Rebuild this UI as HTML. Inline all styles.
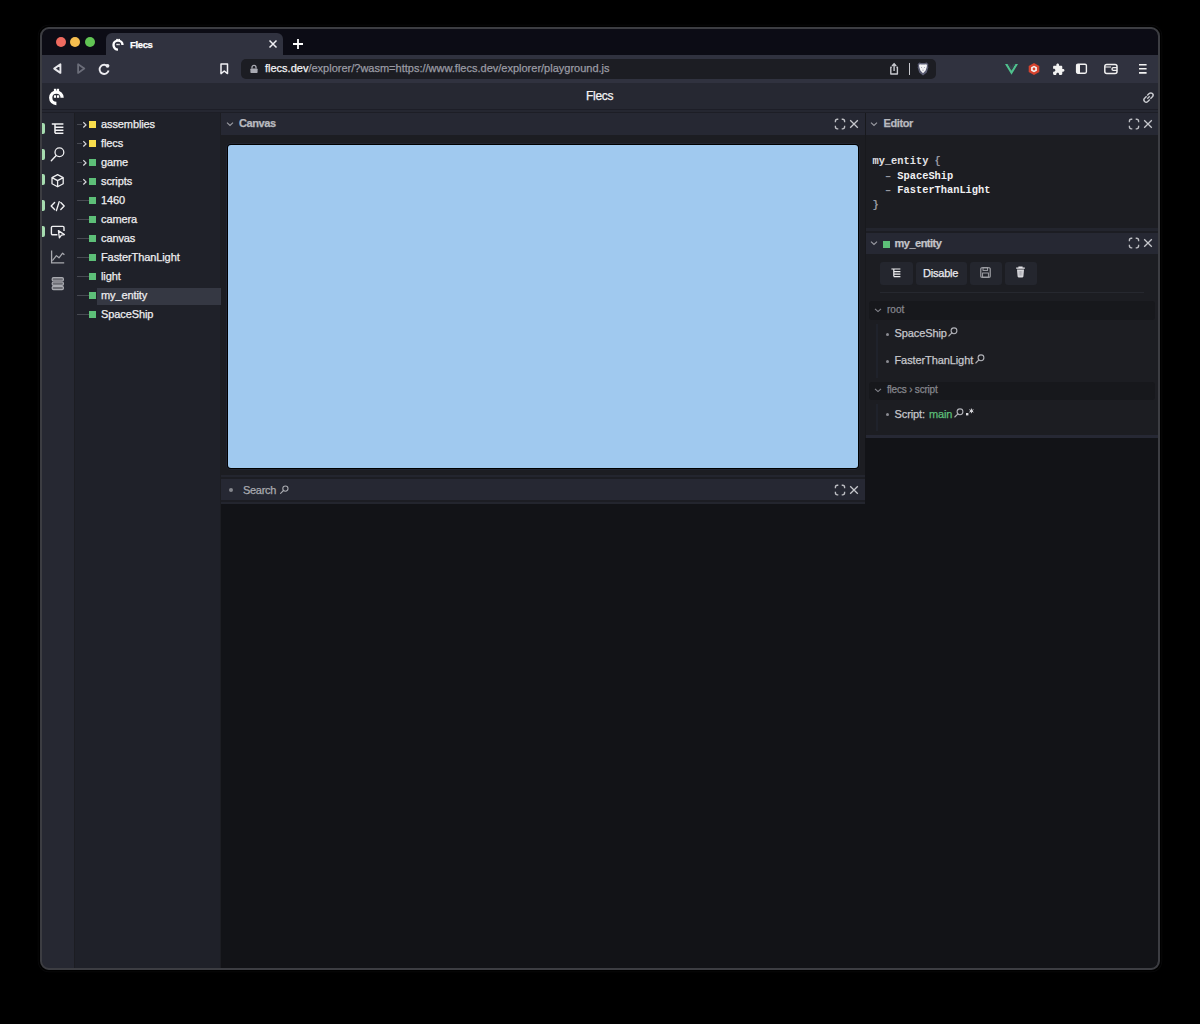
<!DOCTYPE html>
<html><head><meta charset="utf-8">
<style>
*{margin:0;padding:0;box-sizing:border-box}
html,body{width:1200px;height:1024px;background:#000;overflow:hidden;font-family:"Liberation Sans",sans-serif}
.a{position:absolute}
#win{position:absolute;left:41px;top:27px;width:1118px;height:943px;border:1px solid #3c3d42;border-radius:9px;overflow:hidden;background:#121317}
#pg{position:absolute;left:-42px;top:-28px;width:1200px;height:1024px}
svg{position:absolute;overflow:visible}
.t{position:absolute;white-space:pre;line-height:1;-webkit-text-stroke:0.25px currentColor}
</style></head><body>
<div id="win"><div id="pg">
 <!-- tab bar -->
 <div class="a" style="left:0;top:0;width:1200px;height:55px;background:#0c0c15"></div>
 <div class="a" style="left:0;top:55px;width:1200px;height:28px;background:#30323f"></div>
 <div class="a" style="left:106px;top:33px;width:177px;height:23px;background:#30323f;border-radius:6px 6px 0 0"></div>
 <!-- traffic lights -->
 <div class="a" style="left:55.8px;top:37px;width:10px;height:10px;border-radius:50%;background:#ee6a5f"></div>
 <div class="a" style="left:70.4px;top:37px;width:10px;height:10px;border-radius:50%;background:#f5bd4f"></div>
 <div class="a" style="left:85px;top:37px;width:10px;height:10px;border-radius:50%;background:#61c454"></div>
 <!-- tab -->
 <svg style="left:111px;top:37px" width="15" height="15" viewBox="0 0 15 15">
  <path d="M7 12.6 A4.5 4.5 0 1 1 11.5 8.1" fill="none" stroke="#fff" stroke-width="2.4"/>
  <rect x="5.2" y="1.9" width="1.7" height="1.5" fill="#fff"/><rect x="7.3" y="1.9" width="1.7" height="1.5" fill="#fff"/>
  <rect x="5.4" y="6.8" width="1.5" height="1.4" fill="#fff"/><rect x="7.2" y="6.8" width="1.5" height="1.4" fill="#fff"/>
 </svg>
 <div class="t" style="left:130px;top:40px;font-size:9.5px;font-weight:bold;color:#fff;letter-spacing:-0.35px">Flecs</div>
 <svg style="left:268px;top:39px" width="10" height="10" viewBox="0 0 10 10"><path d="M1.5 1.5 L8.5 8.5 M8.5 1.5 L1.5 8.5" stroke="#f0f0f4" stroke-width="1.5"/></svg>
 <svg style="left:292px;top:38px" width="12" height="12" viewBox="0 0 12 12"><path d="M6 1 V11 M1 6 H11" stroke="#fff" stroke-width="1.8"/></svg>
 <!-- toolbar -->
 <svg style="left:50px;top:61px" width="16" height="16" viewBox="0 0 16 16"><path d="M4.2 7.6 L10.4 3.3 V11.9 Z" fill="none" stroke="#e6e6ea" stroke-width="1.9" stroke-linejoin="round"/></svg>
 <svg style="left:74px;top:61px" width="16" height="16" viewBox="0 0 16 16"><path d="M10.3 7.6 L4.1 3.3 V11.9 Z" fill="none" stroke="#6b6d79" stroke-width="1.8" stroke-linejoin="round"/></svg>
 <svg style="left:96px;top:61px" width="16" height="16" viewBox="0 0 16 16"><path d="M11.9 5.6 A4.6 4.6 0 1 0 12.6 9.6" fill="none" stroke="#ececf0" stroke-width="1.9"/><circle cx="11.5" cy="4.8" r="1.9" fill="#ececf0"/></svg>
 <svg style="left:218px;top:61px" width="12" height="16" viewBox="0 0 12 16"><path d="M3 3 H9.5 V12.6 L6.25 10 L3 12.6 Z" fill="none" stroke="#f0f0f4" stroke-width="1.5" stroke-linejoin="round"/></svg>
 <div class="a" style="left:241px;top:59px;width:695px;height:20px;background:#1c1d23;border-radius:5px"></div>
 <svg style="left:249px;top:64px" width="10" height="10" viewBox="0 0 10 10"><path d="M3 4.6 V3.3 A2 2 0 0 1 7 3.3 V4.6" fill="none" stroke="#a9aab2" stroke-width="1.3"/><rect x="1.4" y="4.5" width="7.2" height="4.6" rx="0.8" fill="#a9aab2"/></svg>
 <div class="t" style="left:265px;top:63px;font-size:11px;color:#f2f2f4">flecs.dev<span style="color:#9a9ba3">/explorer/?wasm=https://www.flecs.dev/explorer/playground.js</span></div>
 <svg style="left:888px;top:62px" width="12" height="14" viewBox="0 0 12 14"><path d="M3.8 5.2 H2.8 V12 H9.4 V5.2 H8.4" fill="none" stroke="#c8c9cf" stroke-width="1.4" stroke-linejoin="round"/><path d="M6.1 9 V2 M4 4 L6.1 1.8 L8.2 4" fill="none" stroke="#c8c9cf" stroke-width="1.4"/></svg>
 <div class="a" style="left:908.5px;top:63px;width:1.3px;height:12px;background:#c8c9ce"></div>
 <svg style="left:916px;top:61px" width="14" height="16" viewBox="0 0 14 16"><path d="M3.2 1.4 L5.2 1.9 H8.8 L10.8 1.4 L12.4 3.4 L12 5 L12.4 6.2 L10.8 11.6 L7 14.6 L3.2 11.6 L1.6 6.2 L2 5 L1.6 3.4 Z" fill="#5a5c72"/><path d="M3.6 3.2 L5.4 3.4 H8.6 L10.4 3.2 L11 4.4 L10.6 6.4 L9.6 9.6 L7 12.2 L4.4 9.6 L3.4 6.4 L3 4.4 Z" fill="#f4f4f6"/><path d="M5 6.2 L6.2 7 M9 6.2 L7.8 7 M6.2 9.2 H7.8" stroke="#8a8ca0" stroke-width="0.7"/></svg>
 <svg style="left:1004.5px;top:63.5px" width="13" height="11" viewBox="0 0 13 11"><path d="M0 0 L6.5 10.8 L13 0 H10.4 L6.5 6.5 L2.6 0 Z" fill="#4fc08d"/><path d="M2.6 0 L6.5 6.5 L10.4 0 H8.1 L6.5 2.7 L4.9 0 Z" fill="#34404a"/></svg>
 <svg style="left:1027px;top:62px" width="14" height="14" viewBox="0 0 14 14"><path d="M7 1 L12.3 4 V10 L7 13 L1.7 10 V4 Z" fill="#d5432e"/><path d="M7 3.7 L9.9 5.35 V8.65 L7 10.3 L4.1 8.65 V5.35 Z" fill="#f3f3f3"/><circle cx="7" cy="7" r="1.4" fill="#d5432e"/></svg>
 <svg style="left:1051.5px;top:62.5px" width="13" height="13" viewBox="0 0 24 24"><path d="M20.5 11H19V7c0-1.1-.9-2-2-2h-4V3.5C13 2.12 11.88 1 10.5 1S8 2.12 8 3.5V5H4c-1.1 0-1.99.9-1.99 2v3.8H3.5c1.49 0 2.7 1.210 2.7 2.7s-1.21 2.7-2.7 2.7H2V20c0 1.1.9 2 2 2h3.8v-1.5c0-1.49 1.21-2.7 2.7-2.7 1.49 0 2.7 1.21 2.7 2.7V22H17c1.1 0 2-.9 2-2v-4h1.5c1.38 0 2.5-1.12 2.5-2.5S21.880 11 20.5 11z" fill="#f2f2f2"/></svg>
 <svg style="left:1075px;top:62px" width="13" height="13" viewBox="0 0 13 13"><rect x="1.6" y="2.2" width="9.8" height="9" rx="1.4" fill="none" stroke="#f2f2f2" stroke-width="1.4"/><rect x="1.6" y="2.2" width="3.4" height="9" fill="#f2f2f2"/></svg>
 <svg style="left:1103px;top:62px" width="16" height="14" viewBox="0 0 16 14"><rect x="1.8" y="2.4" width="12.2" height="9.2" rx="2" fill="none" stroke="#f0f0f0" stroke-width="1.5"/><path d="M14 5.6 H10.4 A1.3 1.3 0 0 0 10.4 8.4 H14" fill="none" stroke="#f0f0f0" stroke-width="1.4"/><path d="M1.8 5 H8" stroke="#f0f0f0" stroke-width="1.2"/></svg>
 <svg style="left:1137px;top:62px" width="12" height="14" viewBox="0 0 12 14"><path d="M2 2.7 H9.6 M2 6.8 H9.6 M2 10.9 H9.6" stroke="#f2f2f2" stroke-width="1.6"/></svg>
 <!-- app header -->
 <div class="a" style="left:0;top:83px;width:1200px;height:26px;background:#262832"></div>
 <div class="a" style="left:0;top:109px;width:1200px;height:1px;background:#1d1e27"></div>
 <div class="a" style="left:0;top:110px;width:1200px;height:1.6px;background:#252731"></div>
 <div class="a" style="left:0;top:111.6px;width:1200px;height:1.4px;background:#1d1e26"></div>
 <svg style="left:48px;top:88px" width="18" height="18" viewBox="0 0 18 18">
  <path d="M8.4 15.5 A5.7 5.7 0 1 1 14.1 9.8" fill="none" stroke="#fff" stroke-width="3.3"/>
  <rect x="5.9" y="0.8" width="2.3" height="2.4" fill="#fff"/><rect x="8.8" y="0.8" width="2.3" height="2.4" fill="#fff"/>
  <rect x="5.9" y="7.3" width="2.2" height="2.5" fill="#fff"/><rect x="9" y="7.3" width="2.2" height="2.5" fill="#fff"/>
 </svg>
 <div class="t" style="left:586px;top:90px;font-size:12px;color:#f4f4f6;letter-spacing:-0.3px">Flecs</div>
 <svg style="left:1141px;top:90px" width="15" height="15" viewBox="0 0 15 15"><path d="M6.3 8.7 L8.7 6.3" stroke="#c9cacf" stroke-width="1.3"/><path d="M5.6 6.2 L3.6 8.2 A2 2 0 0 0 6.8 11.4 L8.8 9.4 M9.4 8.8 L11.4 6.8 A2 2 0 0 0 8.2 3.6 L6.2 5.6" fill="none" stroke="#c9cacf" stroke-width="1.4"/></svg>
 <!-- left columns -->
 <div class="a" style="left:42px;top:113px;width:32px;height:860px;background:#262832"></div>
 <div class="a" style="left:74px;top:113px;width:1px;height:860px;background:#1c1d22"></div>
 <div class="a" style="left:75px;top:113px;width:145px;height:860px;background:#1f2129"></div>
 <div class="a" style="left:220px;top:113px;width:1px;height:860px;background:#1c1d22"></div>

 <!-- sidebar icons -->
 <div class="a" style="left:42px;top:122.5px;width:3px;height:11px;border-radius:0 2px 2px 0;background:#a6dcb0"></div>
 <div class="a" style="left:42px;top:148.5px;width:3px;height:11px;border-radius:0 2px 2px 0;background:#a6dcb0"></div>
 <div class="a" style="left:42px;top:174px;width:3px;height:11px;border-radius:0 2px 2px 0;background:#a6dcb0"></div>
 <div class="a" style="left:42px;top:199.5px;width:3px;height:11px;border-radius:0 2px 2px 0;background:#a6dcb0"></div>
 <div class="a" style="left:42px;top:225.5px;width:3px;height:11px;border-radius:0 2px 2px 0;background:#a6dcb0"></div>
 <svg style="left:50px;top:121px" width="16" height="16" viewBox="0 0 16 16"><path d="M1.8 3.1 H13.4 M5 3.1 V12.3 M5 6.3 H13.4 M5 9.3 H13.4 M5 12.3 H13.4" fill="none" stroke="#f2f2f4" stroke-width="1.5"/></svg>
 <svg style="left:50px;top:146px" width="16" height="17" viewBox="0 0 16 17"><circle cx="9.4" cy="6.3" r="4.4" fill="none" stroke="#eeeef0" stroke-width="1.3"/><path d="M6.2 9.6 L1.3 14.8" stroke="#eeeef0" stroke-width="1.4" stroke-linecap="round"/></svg>
 <svg style="left:50px;top:173px" width="16" height="16" viewBox="0 0 16 16"><path d="M7.6 1.6 L13.2 4.6 V10.8 L7.6 13.8 L2 10.8 V4.6 Z M2 4.6 L7.6 7.6 L13.2 4.6 M7.6 7.6 V13.8" fill="none" stroke="#eeeef0" stroke-width="1.3" stroke-linejoin="round"/></svg>
 <svg style="left:50px;top:198px" width="16" height="16" viewBox="0 0 16 16"><path d="M4.6 4.6 L1.2 8 L4.6 11.4 M10.8 4.6 L14.2 8 L10.8 11.4 M9.2 3.6 L6.4 12.6" fill="none" stroke="#eeeef0" stroke-width="1.4" stroke-linecap="round" stroke-linejoin="round"/></svg>
 <svg style="left:50px;top:224px" width="16" height="16" viewBox="0 0 16 16"><path d="M7.4 10.8 H2.6 A1.2 1.2 0 0 1 1.4 9.6 V3.6 A1.2 1.2 0 0 1 2.6 2.4 H12.8 A1.2 1.2 0 0 1 14 3.6 V7" fill="none" stroke="#eeeef0" stroke-width="1.4"/><path d="M8.4 6.6 L14.4 10.6 L11.4 11.2 L9.4 13.8 Z" fill="none" stroke="#eeeef0" stroke-width="1.3" stroke-linejoin="round"/></svg>
 <svg style="left:50px;top:249px" width="16" height="16" viewBox="0 0 16 16"><path d="M1.6 1.4 V13.8 H14.2" fill="none" stroke="#a9aab0" stroke-width="1.3"/><path d="M2.4 11.6 L6.4 6.6 L9 8.8 L12.6 4.2 L14.4 5.8" fill="none" stroke="#a9aab0" stroke-width="1.2" stroke-linejoin="round"/></svg>
 <svg style="left:50px;top:276px" width="16" height="16" viewBox="0 0 16 16"><rect x="2.2" y="1.7" width="11.2" height="3.3" rx="1.3" fill="#6c6d74" stroke="#a9aab0" stroke-width="1.2"/><rect x="2.2" y="6" width="11.2" height="3.3" rx="1.3" fill="#6c6d74" stroke="#a9aab0" stroke-width="1.2"/><rect x="2.2" y="10.3" width="11.2" height="3.3" rx="1.3" fill="#6c6d74" stroke="#a9aab0" stroke-width="1.2"/></svg>
 <!-- tree -->
 <div class="a" style="left:97px;top:287.5px;width:124px;height:17px;background:#353843"></div>
 <div class="a" style="left:77px;top:124.1px;width:4.5px;height:1px;background:#474951"></div>
 <svg style="left:80.5px;top:119.6px" width="8" height="10" viewBox="0 0 8 10"><path d="M2.3 2.3 L5 4.9 L2.3 7.5" fill="none" stroke="#d6d6da" stroke-width="1.25"/></svg>
 <div class="a" style="left:89px;top:121.3px;width:6.6px;height:6.6px;background:#f8dd4c"></div>
 <div class="t" style="left:101px;top:118.5px;font-size:11px;color:#eeeef0;letter-spacing:-0.1px">assemblies</div>
 <div class="a" style="left:77px;top:143.1px;width:4.5px;height:1px;background:#474951"></div>
 <svg style="left:80.5px;top:138.6px" width="8" height="10" viewBox="0 0 8 10"><path d="M2.3 2.3 L5 4.9 L2.3 7.5" fill="none" stroke="#d6d6da" stroke-width="1.25"/></svg>
 <div class="a" style="left:89px;top:140.3px;width:6.6px;height:6.6px;background:#f8dd4c"></div>
 <div class="t" style="left:101px;top:137.5px;font-size:11px;color:#eeeef0;letter-spacing:-0.1px">flecs</div>
 <div class="a" style="left:77px;top:162.1px;width:4.5px;height:1px;background:#474951"></div>
 <svg style="left:80.5px;top:157.6px" width="8" height="10" viewBox="0 0 8 10"><path d="M2.3 2.3 L5 4.9 L2.3 7.5" fill="none" stroke="#d6d6da" stroke-width="1.25"/></svg>
 <div class="a" style="left:89px;top:159.3px;width:6.6px;height:6.6px;background:#5dbf78"></div>
 <div class="t" style="left:101px;top:156.5px;font-size:11px;color:#eeeef0;letter-spacing:-0.1px">game</div>
 <div class="a" style="left:77px;top:181.1px;width:4.5px;height:1px;background:#474951"></div>
 <svg style="left:80.5px;top:176.6px" width="8" height="10" viewBox="0 0 8 10"><path d="M2.3 2.3 L5 4.9 L2.3 7.5" fill="none" stroke="#d6d6da" stroke-width="1.25"/></svg>
 <div class="a" style="left:89px;top:178.3px;width:6.6px;height:6.6px;background:#5dbf78"></div>
 <div class="t" style="left:101px;top:175.5px;font-size:11px;color:#eeeef0;letter-spacing:-0.1px">scripts</div>
 <div class="a" style="left:77px;top:200.1px;width:11.5px;height:1px;background:#474951"></div>
 <div class="a" style="left:89px;top:197.3px;width:6.6px;height:6.6px;background:#5dbf78"></div>
 <div class="t" style="left:101px;top:194.5px;font-size:11px;color:#eeeef0;letter-spacing:-0.1px">1460</div>
 <div class="a" style="left:77px;top:219.1px;width:11.5px;height:1px;background:#474951"></div>
 <div class="a" style="left:89px;top:216.3px;width:6.6px;height:6.6px;background:#5dbf78"></div>
 <div class="t" style="left:101px;top:213.5px;font-size:11px;color:#eeeef0;letter-spacing:-0.1px">camera</div>
 <div class="a" style="left:77px;top:238.1px;width:11.5px;height:1px;background:#474951"></div>
 <div class="a" style="left:89px;top:235.3px;width:6.6px;height:6.6px;background:#5dbf78"></div>
 <div class="t" style="left:101px;top:232.5px;font-size:11px;color:#eeeef0;letter-spacing:-0.1px">canvas</div>
 <div class="a" style="left:77px;top:257.1px;width:11.5px;height:1px;background:#474951"></div>
 <div class="a" style="left:89px;top:254.3px;width:6.6px;height:6.6px;background:#5dbf78"></div>
 <div class="t" style="left:101px;top:251.5px;font-size:11px;color:#eeeef0;letter-spacing:-0.1px">FasterThanLight</div>
 <div class="a" style="left:77px;top:276.1px;width:11.5px;height:1px;background:#474951"></div>
 <div class="a" style="left:89px;top:273.3px;width:6.6px;height:6.6px;background:#5dbf78"></div>
 <div class="t" style="left:101px;top:270.5px;font-size:11px;color:#eeeef0;letter-spacing:-0.1px">light</div>
 <div class="a" style="left:77px;top:295.1px;width:11.5px;height:1px;background:#474951"></div>
 <div class="a" style="left:89px;top:292.3px;width:6.6px;height:6.6px;background:#5dbf78"></div>
 <div class="t" style="left:101px;top:289.5px;font-size:11px;color:#eeeef0;letter-spacing:-0.1px">my_entity</div>
 <div class="a" style="left:77px;top:314.1px;width:11.5px;height:1px;background:#474951"></div>
 <div class="a" style="left:89px;top:311.3px;width:6.6px;height:6.6px;background:#5dbf78"></div>
 <div class="t" style="left:101px;top:308.5px;font-size:11px;color:#eeeef0;letter-spacing:-0.1px">SpaceShip</div>
 <!-- canvas panel -->
 <div class="a" style="left:221px;top:113px;width:644px;height:22px;background:#262833"></div>
 <div class="a" style="left:221px;top:135px;width:644px;height:340px;background:#1c1d22"></div>
 <div class="a" style="left:228px;top:145px;width:630px;height:323px;background:#a0c9ef;border-radius:3px;box-shadow:0 0 0 1px #000,0 0 0 2px #222531"></div>
 <svg style="left:225px;top:119px" width="10" height="10" viewBox="0 0 10 10"><path d="M2 3.6 L5 6.4 L8 3.6" fill="none" stroke="#9a9ba2" stroke-width="1.2"/></svg>
 <div class="t" style="left:239px;top:118px;font-size:11px;font-weight:bold;color:#b8b9bf;letter-spacing:-0.4px">Canvas</div>
 <svg style="left:833.5px;top:117.5px" width="12" height="12" viewBox="0 0 12 12"><path d="M1.4 4.3 V3.2 A2 2 0 0 1 3.4 1.2 H4.3 M7.7 1.2 H8.6 A2 2 0 0 1 10.6 3.2 V4.3 M10.6 7.7 V8.8 A2 2 0 0 1 8.6 10.8 H7.7 M4.3 10.8 H3.4 A2 2 0 0 1 1.4 8.8 V7.7" fill="none" stroke="#bdbec3" stroke-width="1.35"/></svg><svg style="left:849.0px;top:118.5px" width="10" height="10" viewBox="0 0 10 10"><path d="M1.2 1.2 L8.8 8.8 M8.8 1.2 L1.2 8.8" stroke="#c6c7cc" stroke-width="1.3"/></svg>
 <div class="a" style="left:221px;top:475px;width:644px;height:2px;background:#23252e"></div>
 <div class="a" style="left:221px;top:477px;width:644px;height:2px;background:#1c1d23"></div>
 <div class="a" style="left:221px;top:479px;width:644px;height:21px;background:#262833"></div>
 <div class="a" style="left:221px;top:500px;width:644px;height:2px;background:#1c1d23"></div>
 <div class="a" style="left:221px;top:502px;width:644px;height:2px;background:#23252e"></div>
 <div class="a" style="left:229px;top:488px;width:4px;height:4px;border-radius:50%;background:#85868d"></div>
 <div class="t" style="left:243px;top:485px;font-size:11px;color:#a9aab0;letter-spacing:-0.3px">Search</div>
 <svg style="left:279px;top:484px" width="12" height="12" viewBox="0 0 12 12"><circle cx="6.4" cy="4.6" r="2.6" fill="none" stroke="#a9aab0" stroke-width="1.1"/><path d="M4.5 6.5 L1.6 9.4" stroke="#a9aab0" stroke-width="1.1" stroke-linecap="round"/></svg>
 <svg style="left:833.5px;top:483.5px" width="12" height="12" viewBox="0 0 12 12"><path d="M1.4 4.3 V3.2 A2 2 0 0 1 3.4 1.2 H4.3 M7.7 1.2 H8.6 A2 2 0 0 1 10.6 3.2 V4.3 M10.6 7.7 V8.8 A2 2 0 0 1 8.6 10.8 H7.7 M4.3 10.8 H3.4 A2 2 0 0 1 1.4 8.8 V7.7" fill="none" stroke="#bdbec3" stroke-width="1.35"/></svg><svg style="left:849.0px;top:484.5px" width="10" height="10" viewBox="0 0 10 10"><path d="M1.2 1.2 L8.8 8.8 M8.8 1.2 L1.2 8.8" stroke="#c6c7cc" stroke-width="1.3"/></svg>
 <div class="a" style="left:865px;top:113px;width:1px;height:325px;background:#18191d"></div>
 <!-- editor panel -->
 <div class="a" style="left:866px;top:113px;width:292px;height:22px;background:#262833"></div>
 <div class="a" style="left:866px;top:135px;width:292px;height:93px;background:#1c1d22"></div>
 <svg style="left:869px;top:119px" width="10" height="10" viewBox="0 0 10 10"><path d="M2 3.6 L5 6.4 L8 3.6" fill="none" stroke="#9a9ba2" stroke-width="1.2"/></svg>
 <div class="t" style="left:883.5px;top:118px;font-size:11px;font-weight:bold;color:#b8b9bf;letter-spacing:-0.4px">Editor</div>
 <svg style="left:1127.5px;top:117.5px" width="12" height="12" viewBox="0 0 12 12"><path d="M1.4 4.3 V3.2 A2 2 0 0 1 3.4 1.2 H4.3 M7.7 1.2 H8.6 A2 2 0 0 1 10.6 3.2 V4.3 M10.6 7.7 V8.8 A2 2 0 0 1 8.6 10.8 H7.7 M4.3 10.8 H3.4 A2 2 0 0 1 1.4 8.8 V7.7" fill="none" stroke="#bdbec3" stroke-width="1.35"/></svg><svg style="left:1143.0px;top:118.5px" width="10" height="10" viewBox="0 0 10 10"><path d="M1.2 1.2 L8.8 8.8 M8.8 1.2 L1.2 8.8" stroke="#c6c7cc" stroke-width="1.3"/></svg>
 <div style="position:absolute;left:872.5px;top:154px;font-family:'Liberation Mono',monospace;font-size:10.35px;line-height:14.5px;white-space:pre;color:#9799a2;font-weight:bold"><span style="color:#e2e2e6">my_entity</span> {
  – <span style="color:#f0f0f2">SpaceShip</span>
  – <span style="color:#f0f0f2">FasterThanLight</span>
}</div>
 <div class="a" style="left:866px;top:228px;width:292px;height:3px;background:#23252e"></div>
 <div class="a" style="left:866px;top:231px;width:292px;height:2px;background:#1c1d23"></div>
 <div class="a" style="left:866px;top:233px;width:292px;height:21px;background:#262833"></div>
 <div class="a" style="left:866px;top:254px;width:292px;height:180.5px;background:#1c1d22"></div>
 <div class="a" style="left:866px;top:434.5px;width:292px;height:3.5px;background:#262834"></div>
 <svg style="left:869px;top:238px" width="10" height="10" viewBox="0 0 10 10"><path d="M2 3.6 L5 6.4 L8 3.6" fill="none" stroke="#9a9ba2" stroke-width="1.2"/></svg>
 <div class="a" style="left:883px;top:241px;width:6.5px;height:6.5px;background:#5dbf78"></div>
 <div class="t" style="left:894.5px;top:238px;font-size:11px;font-weight:bold;color:#c2c3c8;letter-spacing:-0.5px">my_entity</div>
 <svg style="left:1127.5px;top:237.0px" width="12" height="12" viewBox="0 0 12 12"><path d="M1.4 4.3 V3.2 A2 2 0 0 1 3.4 1.2 H4.3 M7.7 1.2 H8.6 A2 2 0 0 1 10.6 3.2 V4.3 M10.6 7.7 V8.8 A2 2 0 0 1 8.6 10.8 H7.7 M4.3 10.8 H3.4 A2 2 0 0 1 1.4 8.8 V7.7" fill="none" stroke="#bdbec3" stroke-width="1.35"/></svg><svg style="left:1143.0px;top:238.0px" width="10" height="10" viewBox="0 0 10 10"><path d="M1.2 1.2 L8.8 8.8 M8.8 1.2 L1.2 8.8" stroke="#c6c7cc" stroke-width="1.3"/></svg>
 <!-- toolbar buttons -->
 <div class="a" style="left:880px;top:262px;width:32.5px;height:23px;background:#24262e;border-radius:3px"></div>
 <div class="a" style="left:916px;top:262px;width:51px;height:23px;background:#24262e;border-radius:3px"></div>
 <div class="a" style="left:970px;top:262px;width:32px;height:23px;background:#24262e;border-radius:3px"></div>
 <div class="a" style="left:1004.5px;top:262px;width:32.5px;height:23px;background:#24262e;border-radius:3px"></div>
 <svg style="left:890px;top:267px" width="12" height="12" viewBox="0 0 12 12"><path d="M1.4 2 H10.4 M3.8 2 V9.6 M3.8 4.6 H10.4 M3.8 7.1 H10.4 M3.8 9.6 H10.4" fill="none" stroke="#eeeef0" stroke-width="1.2"/></svg>
 <div class="t" style="left:923px;top:268px;font-size:11px;color:#ebebee;letter-spacing:-0.2px">Disable</div>
 <svg style="left:979px;top:266px" width="13" height="13" viewBox="0 0 13 13"><rect x="1.8" y="1.8" width="9.4" height="9.4" rx="1" fill="none" stroke="#a9aab0" stroke-width="1.1"/><rect x="4" y="1.8" width="4.6" height="2.6" fill="none" stroke="#a9aab0" stroke-width="0.9"/><rect x="3.6" y="7" width="5.8" height="4.2" fill="none" stroke="#a9aab0" stroke-width="0.9"/></svg>
 <svg style="left:1014px;top:265px" width="13" height="14" viewBox="0 0 13 14"><path d="M2.2 3.2 H10.8 M5 3.2 V2 H8 V3.2" fill="none" stroke="#e6e6ea" stroke-width="1.2"/><path d="M3 4.4 H10 L9.4 11.6 A1 1 0 0 1 8.4 12.4 H4.6 A1 1 0 0 1 3.6 11.6 Z" fill="#d8d8dc"/><path d="M5.2 6 V10.6 M6.5 6 V10.6 M7.8 6 V10.6" stroke="#9a9ba2" stroke-width="0.6"/></svg>
 <div class="a" style="left:880px;top:292px;width:264px;height:1px;background:#26282f"></div>
 <!-- root section -->
 <div class="a" style="left:869px;top:301px;width:286px;height:18.5px;background:#17181c;border-radius:3px"></div>
 <svg style="left:873px;top:305px" width="10" height="10" viewBox="0 0 10 10"><path d="M2 3.8 L5 6.6 L8 3.8" fill="none" stroke="#85868d" stroke-width="1.1"/></svg>
 <div class="t" style="left:887px;top:305px;font-size:10px;color:#85868d">root</div>
 <div class="a" style="left:876px;top:323.5px;width:2px;height:54px;background:#1f222b"></div>
 <div class="a" style="left:886px;top:333px;width:3px;height:3px;border-radius:50%;background:#8a8b92"></div>
 <div class="t" style="left:894.5px;top:328px;font-size:11px;color:#c6c7cc;letter-spacing:-0.1px">SpaceShip</div>
 <svg style="left:947px;top:326px" width="12" height="12" viewBox="0 0 12 12"><circle cx="7" cy="4.8" r="2.9" fill="none" stroke="#b0b1b7" stroke-width="1.1"/><path d="M4.9 6.9 L1.8 10" stroke="#b0b1b7" stroke-width="1.1" stroke-linecap="round"/></svg>
 <div class="a" style="left:886px;top:360px;width:3px;height:3px;border-radius:50%;background:#8a8b92"></div>
 <div class="t" style="left:894.5px;top:355px;font-size:11px;color:#c6c7cc;letter-spacing:-0.1px">FasterThanLight</div>
 <svg style="left:974px;top:353px" width="12" height="12" viewBox="0 0 12 12"><circle cx="7" cy="4.8" r="2.9" fill="none" stroke="#b0b1b7" stroke-width="1.1"/><path d="M4.9 6.9 L1.8 10" stroke="#b0b1b7" stroke-width="1.1" stroke-linecap="round"/></svg>
 <!-- flecs > script -->
 <div class="a" style="left:869px;top:381.5px;width:286px;height:18px;background:#17181c;border-radius:3px"></div>
 <svg style="left:873px;top:385px" width="10" height="10" viewBox="0 0 10 10"><path d="M2 3.8 L5 6.6 L8 3.8" fill="none" stroke="#85868d" stroke-width="1.1"/></svg>
 <div class="t" style="left:887px;top:385px;font-size:10px;color:#85868d;letter-spacing:-0.2px">flecs › script</div>
 <div class="a" style="left:876px;top:404px;width:2px;height:26.5px;background:#1f222b"></div>
 <div class="a" style="left:886px;top:413px;width:3px;height:3px;border-radius:50%;background:#8a8b92"></div>
 <div class="t" style="left:894.5px;top:408.5px;font-size:11px;color:#c6c7cc;letter-spacing:-0.1px">Script: <span style="color:#5cbf78;margin-left:1px">main</span></div>
 <svg style="left:953px;top:407px" width="12" height="12" viewBox="0 0 12 12"><circle cx="7" cy="4.8" r="2.9" fill="none" stroke="#b0b1b7" stroke-width="1.1"/><path d="M4.9 6.9 L1.8 10" stroke="#b0b1b7" stroke-width="1.1" stroke-linecap="round"/></svg>
 <svg style="left:965px;top:407px" width="10" height="10" viewBox="0 0 10 10"><rect x="1" y="6" width="2.4" height="2.4" fill="#dcdce0"/><path d="M6.4 1.6 V6.2 M4.4 2.7 L8.4 5.1 M8.4 2.7 L4.4 5.1" stroke="#dcdce0" stroke-width="1"/></svg>
</div></div>
<div style="position:absolute;left:40px;top:27px;width:1120px;height:943px;border:2px solid #3c3d42;border-radius:9px;box-shadow:0 0 0 1.5px #000,0 0 0 2.2px #0a0a0b;pointer-events:none"></div>
</body></html>
